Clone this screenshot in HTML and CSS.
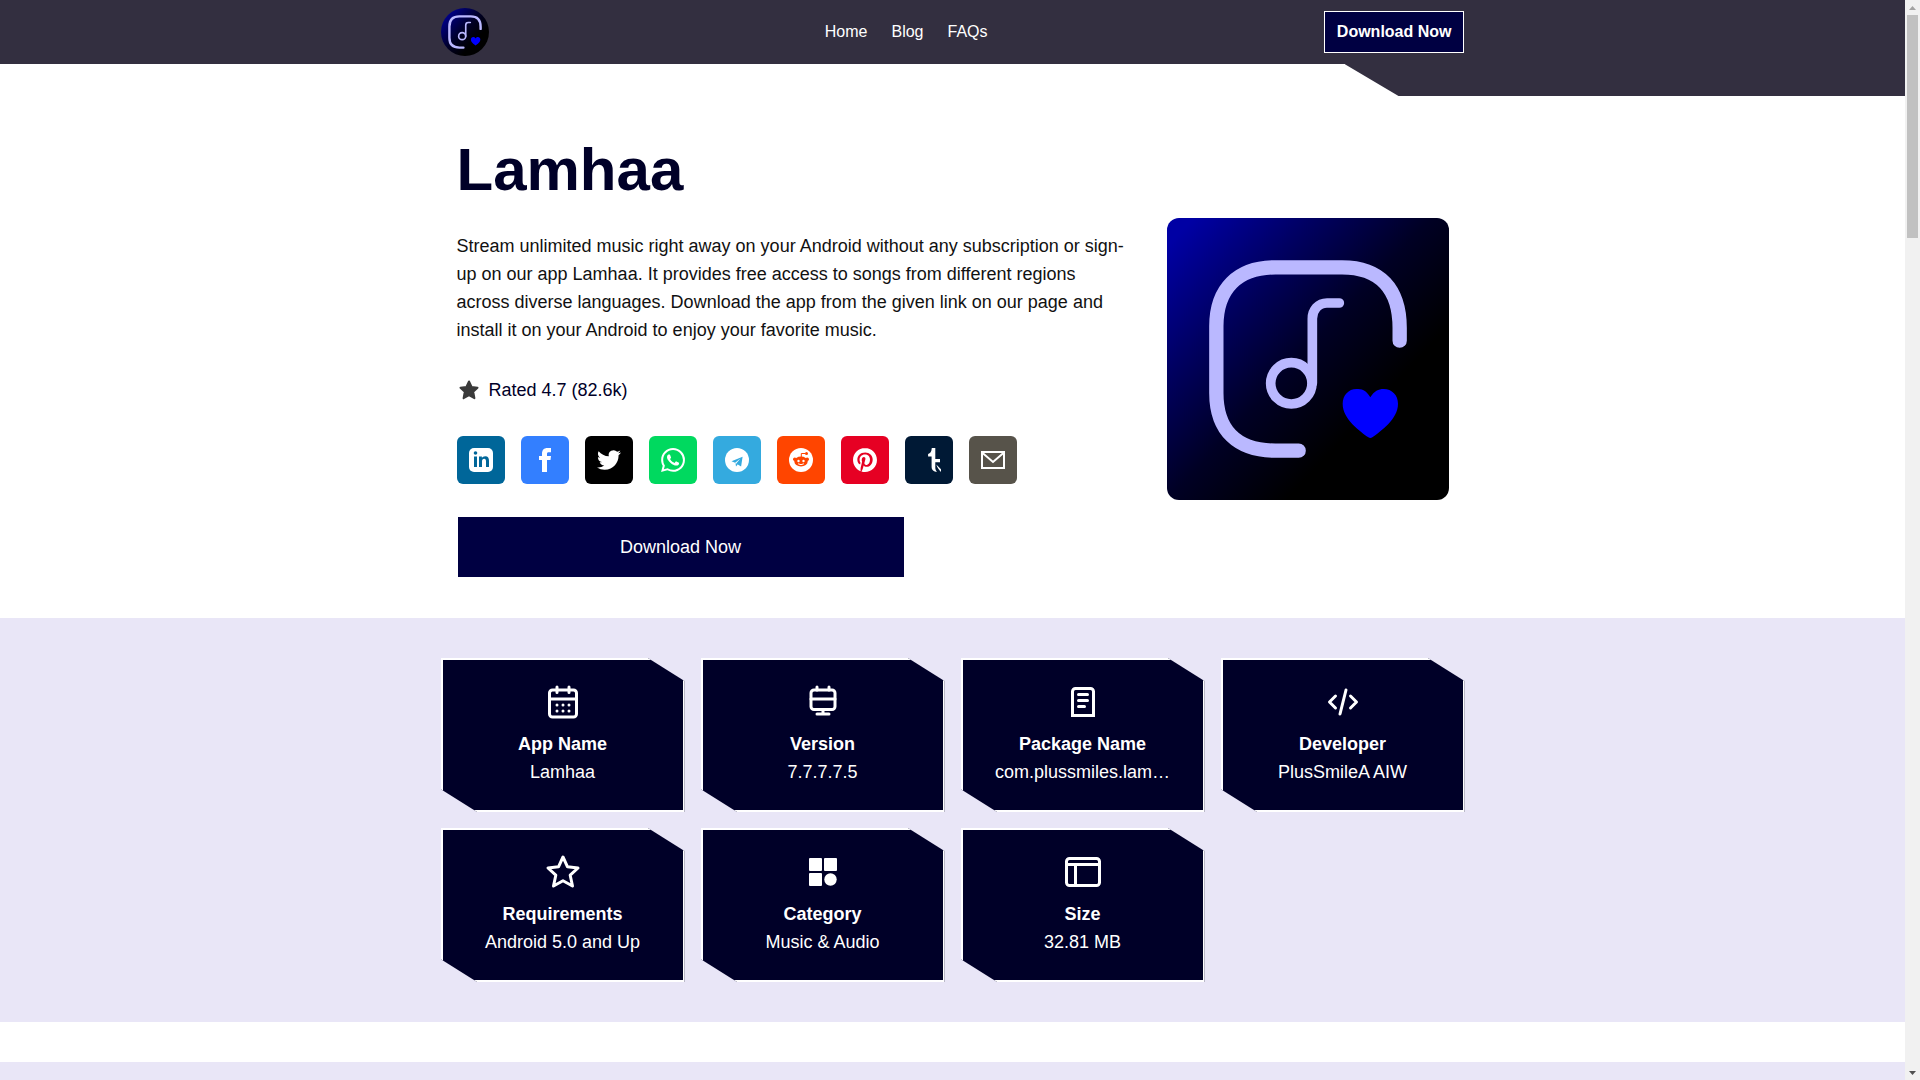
FILE: index.html
```html
<!DOCTYPE html>
<html lang="en">
<head>
  <meta charset="UTF-8">
  <meta name="viewport" content="width=device-width, initial-scale=1">
  <title>Lamhaa</title>
  <link rel="stylesheet" href="styles.css">
</head>
<body>
  <!-- app logo, used in the header and the hero -->
  <svg class="defs" aria-hidden="true">
    <defs>
      <linearGradient id="logo-bg" x1="0" y1="0.1" x2="0.75" y2="0.8">
        <stop offset="0" stop-color="#0000a4"/>
        <stop offset="0.3" stop-color="#000062"/>
        <stop offset="0.6" stop-color="#000024"/>
        <stop offset="0.9" stop-color="#000"/>
      </linearGradient>
      <symbol id="logo" viewBox="0 0 846 846">
        <rect width="846" height="846" fill="url(#logo-bg)"/>
        <g fill="none" stroke="#bab8ff" stroke-linecap="round">
          <path stroke-width="43" d="M698 368V330C698 212 638 148 525 148H325C212 148 148 212 148 325V525C148 638 212 698 325 698H395"/>
          <circle stroke-width="29" cx="373" cy="496" r="62"/>
          <path stroke-width="29" d="M436 496V302C436 276 454 255 480 255H517"/>
        </g>
        <path fill="#0000ff" d="M610 538C596 515 584 513 568 513C545 513 527 532 527 557C527 604 580 640 604 658Q610 662 616 658C640 640 693 604 693 557C693 532 675 513 650 513C634 513 622 519 610 538Z"/>
      </symbol>
    </defs>
  </svg>

  <div class="page">
    <header>
      <div class="container header-inner">
        <a class="logo" href="#" aria-label="Lamhaa"><svg><use href="#logo"/></svg></a>
        <nav>
          <a href="#">Home</a>
          <a href="#">Blog</a>
          <a href="#">FAQs</a>
        </nav>
        <a class="btn-header" href="#">Download Now</a>
      </div>
    </header>
    <div class="header-corner"></div>

    <section class="container hero">
      <div class="hero-text">
        <h1>Lamhaa</h1>
        <p>Stream unlimited music right away on your Android without any subscription or sign-up on our app Lamhaa. It provides free access to songs from different regions across diverse languages. Download the app from the given link on our page and install it on your Android to enjoy your favorite music.</p>
        <div class="rating">
          <svg viewBox="0 0 24 24"><path fill="#3a3a3a" stroke="#3a3a3a" stroke-width="2" stroke-linejoin="round" d="M12 3.5L14.6 9 20.5 9.7 16.2 13.8 17.4 20.2 12 17.2 6.600 20.2 7.800 13.8 3.500 9.700 9.400 9Z"/></svg>
          <span>Rated 4.7 (82.6k)</span>
        </div>
        <div class="share">
          <button class="linkedin" aria-label="LinkedIn">
            <svg viewBox="0 0 24 24"><rect width="24" height="24" rx="5" fill="#fff"/><circle cx="6.500" cy="5" r="1.800" fill="#069"/><path fill="#069" d="M5 8.500h3V19H5zM10 8.500h2.900V10c.6-1.100 1.700-1.800 3.300-1.800 2.900 0 3.800 1.800 3.800 4.600V19h-3v-5.600c0-1.700-.5-2.600-1.800-2.600-1.500 0-2.200 1-2.200 2.700V19h-3z"/></svg>
          </button>
          <button class="facebook" aria-label="Facebook">
            <svg viewBox="0 0 24 24"><path fill="#fff" d="M9 24V12H6V8h3V6c0-4 1.800-6 5.500-6H18v4.200h-2.200C14.400 4.200 14 4.800 14 6v2h4l-.5 4H14v12z"/></svg>
          </button>
          <button class="twitter" aria-label="Twitter">
            <svg viewBox="0 0 24 24"><path fill="#fff" d="M23.953 4.57a10 10 0 01-2.825.775 4.958 4.958 0 002.163-2.723c-.951.555-2.005.959-3.127 1.184a4.92 4.92 0 00-8.384 4.482C7.690 8.095 4.067 6.130 1.640 3.162a4.822 4.822 0 00-.666 2.475c0 1.710.870 3.213 2.188 4.096a4.904 4.904 0 01-2.228-.616v.060a4.923 4.923 0 003.946 4.827 4.996 4.996 0 01-2.212.085 4.936 4.936 0 004.604 3.417 9.867 9.867 0 01-6.102 2.105c-.390 0-.779-.023-1.170-.067a13.995 13.995 0 007.557 2.209c9.053 0 13.998-7.496 13.998-13.985 0-.210 0-.420-.015-.630A9.935 9.935 0 0024 4.590z"/></svg>
          </button>
          <button class="whatsapp" aria-label="WhatsApp">
            <svg viewBox="0 0 24 24"><path fill="#fff" d="M17.472 14.382c-.297-.149-1.758-.867-2.030-.967-.273-.099-.471-.148-.670.150-.197.297-.767.966-.940 1.164-.173.199-.347.223-.644.075-.297-.150-1.255-.463-2.390-1.475-.883-.788-1.480-1.761-1.653-2.059-.173-.297-.018-.458.130-.606.134-.133.298-.347.446-.520.149-.174.198-.298.298-.497.099-.198.050-.371-.025-.520-.075-.149-.669-1.612-.916-2.207-.242-.579-.487-.500-.669-.510-.173-.008-.371-.010-.570-.010-.198 0-.520.074-.792.372-.272.297-1.040 1.016-1.040 2.479 0 1.462 1.065 2.875 1.213 3.074.149.198 2.096 3.200 5.077 4.487.709.306 1.262.489 1.694.625.712.227 1.360.195 1.871.118.571-.085 1.758-.719 2.006-1.413.248-.694.248-1.289.173-1.413-.074-.124-.272-.198-.570-.347m-5.421 7.403h-.004a9.870 9.870 0 01-5.031-1.378l-.361-.214-3.741.982.998-3.648-.235-.374a9.860 9.860 0 01-1.510-5.260c.001-5.450 4.436-9.884 9.888-9.884 2.640 0 5.122 1.030 6.988 2.898a9.825 9.825 0 012.893 6.994c-.003 5.450-4.437 9.884-9.885 9.884m8.413-18.297A11.815 11.815 0 0012.050 0C5.495 0 .160 5.335.157 11.892c0 2.096.547 4.142 1.588 5.945L.057 24l6.305-1.654a11.882 11.882 0 005.683 1.448h.005c6.554 0 11.890-5.335 11.893-11.893a11.821 11.821 0 00-3.480-8.413z"/></svg>
          </button>
          <button class="telegram" aria-label="Telegram">
            <svg viewBox="0 0 24 24"><circle cx="12" cy="12" r="12" fill="#fff"/><path fill="#34aadf" d="M17.600 8.800L6.500 13.300l3.600 1.400 5.400-4.100-4.300 5 4.900 2.900zM10.500 15.300l.5 3.200 1.700-1.900z"/></svg>
          </button>
          <button class="reddit" aria-label="Reddit">
            <svg viewBox="0 0 24 24"><circle cx="12" cy="12" r="12" fill="#fff"/><path fill="none" stroke="#ff4500" d="M12.300 9V5.500h4"/><g fill="#ff4500"><circle cx="17.500" cy="5.600" r="1.500"/><circle cx="5.800" cy="11.300" r="1.800"/><circle cx="18.200" cy="11.300" r="1.800"/><ellipse cx="12" cy="13.500" rx="6.700" ry="5"/></g><circle cx="9.500" cy="13" r="1.200" fill="#fff"/><circle cx="14.500" cy="13" r="1.200" fill="#fff"/><path fill="none" stroke="#fff" stroke-linecap="round" d="M9.500 16q2.500 1.600 5 0"/></svg>
          </button>
          <button class="pinterest" aria-label="Pinterest">
            <svg viewBox="0 0 24 24"><path fill="#fff" d="M12.017 0C5.396 0 .029 5.367.029 11.987c0 5.079 3.158 9.417 7.618 11.162-.105-.949-.199-2.403.041-3.439.219-.937 1.406-5.957 1.406-5.957s-.359-.720-.359-1.781c0-1.663.967-2.911 2.168-2.911 1.024 0 1.518.769 1.518 1.688 0 1.029-.653 2.567-.992 3.992-.285 1.193.600 2.165 1.775 2.165 2.128 0 3.768-2.245 3.768-5.487 0-2.861-2.063-4.869-5.008-4.869-3.410 0-5.409 2.562-5.409 5.199 0 1.033.394 2.143.889 2.741.099.120.112.225.085.345-.090.375-.293 1.199-.334 1.363-.053.225-.172.271-.401.165-1.495-.690-2.433-2.878-2.433-4.646 0-3.776 2.748-7.252 7.920-7.252 4.158 0 7.392 2.967 7.392 6.923 0 4.135-2.607 7.462-6.233 7.462-1.214 0-2.354-.629-2.758-1.379l-.749 2.848c-.269 1.045-1.004 2.352-1.498 3.146 1.123.345 2.306.535 3.550.535 6.607 0 11.985-5.365 11.985-11.987C23.970 5.390 18.592.026 11.985.026z"/></svg>
          </button>
          <button class="tumblr" aria-label="Tumblr">
            <svg viewBox="0 0 24 24"><path fill="#fff" d="M14.800 0h3.500v11H23v3.200h-4.700v5.300c0 1.800.4 3 1.700 4.300-3.200 0-5.400-1.700-5.400-5V8.600h-3.500V6c2.200-.6 3.400-2.300 3.700-6zM19.300 16.500l4.700 4.800V24c-1.700-1.700-3.800-4.200-4.700-7.500z"/></svg>
          </button>
          <button class="email" aria-label="Email">
            <svg viewBox="0 0 24 24"><path fill="none" stroke="#fff" stroke-width="2" d="M1 4h22v16H1zM1 4.500l11 9.500 11-9.500"/></svg>
          </button>
        </div>
        <a class="btn-download" href="#">Download Now</a>
      </div>
      <svg class="app-image" role="img" aria-label="Lamhaa"><use href="#logo"/></svg>
    </section>

    <section class="info">
      <div class="container cards">
        <div class="card">
          <svg viewBox="0 0 36 36"><rect x="4.500" y="6" width="27" height="27" rx="3"/><path d="M4.500 15h27M12 3v5.500M24 3v5.500"/><path class="dots" d="M12 21h0M18 21h0M24 21h0M12 27h0M18 27h0M24 27h0"/></svg>
          <h3>App Name</h3>
          <p>Lamhaa</p>
        </div>
        <div class="card">
          <svg viewBox="0 0 36 36"><rect x="6" y="6" width="24" height="19.500" rx="3"/><path d="M6 15h24M12 3v3M24 3v3M18 25.500V30M12 30h12"/></svg>
          <h3>Version</h3>
          <p>7.7.7.7.5</p>
        </div>
        <div class="card">
          <svg viewBox="0 0 36 36"><path class="sheet" d="M7.500 31.500v-24a3 3 0 013-3h15a3 3 0 013 3v24z"/><path d="M13.500 10.500h9M13.500 16.500h9M13.500 22.500h6"/></svg>
          <h3>Package Name</h3>
          <p>com.plussmiles.lam…</p>
        </div>
        <div class="card">
          <svg viewBox="0 0 36 36"><path d="M10.500 12l-6 6 6 6M25.500 12l6 6-6 6M21 6l-6 24"/></svg>
          <h3>Developer</h3>
          <p>PlusSmileA AIW</p>
        </div>
        <div class="card">
          <svg viewBox="0 0 36 36"><path d="M18 3l4.500 9.800 10.500 1.200-7.800 7.200 2.300 10.800L18 26.800 8.500 32l2.300-10.800L3 14l10.500-1.200z"/></svg>
          <h3>Requirements</h3>
          <p>Android 5.0 and Up</p>
        </div>
        <div class="card">
          <svg class="solid" viewBox="0 0 36 36"><rect x="4" y="4" width="13" height="13" rx="1"/><rect x="19" y="4" width="13" height="13" rx="1"/><rect x="4" y="19" width="13" height="13" rx="1"/><circle cx="25.500" cy="25.500" r="6.200"/></svg>
          <h3>Category</h3>
          <p>Music &amp; Audio</p>
        </div>
        <div class="card">
          <svg viewBox="0 0 36 36"><rect x="1.500" y="4.500" width="33" height="27" rx="3"/><path d="M1.500 10.500h33M10.500 10.500v21"/></svg>
          <h3>Size</h3>
          <p>32.81 MB</p>
        </div>
      </div>
    </section>

    <section class="next"></section>
  </div>

  <div class="scrollbar" aria-hidden="true">
    <svg viewBox="0 0 15 15"><path fill="#a3a3a3" d="M4 10l3.500-4 3.500 4z"/></svg>
    <div class="track"><div class="thumb"></div></div>
    <svg viewBox="0 0 15 15"><path fill="#505050" d="M4 6l3.500 4L11 6z"/></svg>
  </div>
</body>
</html>
```
FILE: styles.css
```css
* {
  box-sizing: border-box;
  margin: 0;
  padding: 0;
}
body {
  display: grid;
  grid-template-columns: minmax(0, 1fr) 15px;
  height: 100vh;
  overflow: hidden;
  background-color: #fff;
  color: #111;
  font-family: "Liberation Sans", Arial, sans-serif;
  font-size: 16px;
  line-height: 24px;
}
a {
  color: white;
  text-decoration: none;
}
svg {
  display: block;
}
.defs {
  position: absolute;
  width: 0;
  height: 0;
}
.page {
  height: 100vh;
  overflow: hidden;
}
.container {
  max-width: 1024px;
  margin: 0 auto;
}

/* header */
header {
  background-color: #332f40;
}
.header-inner {
  display: flex;
  justify-content: space-between;
  align-items: center;
  height: 64px;
}
.logo svg {
  width: 48px;
  height: 48px;
  border-radius: 50%;
}
nav {
  display: flex;
  gap: 24px;
}
.btn-header {
  background-color: #000042;
  border: 1px solid white;
  padding: 8px 12px;
  font-weight: bold;
}
.header-corner {
  width: calc(50% - 392px);
  height: 32px;
  margin-left: auto;
  background-color: #332f40;
  clip-path: polygon(0 0, 100% 0, 100% 100%, 54px 100%);
}

/* hero */
.hero {
  display: grid;
  grid-template-columns: minmax(0, 1fr) 282px;
  gap: 40px;
  align-items: center;
  padding: 44px 16px 40px;
}
.hero-text {
  display: flex;
  flex-direction: column;
  gap: 32px;
  font-size: 18px;
  line-height: 28px;
}
h1 {
  font-size: 60px;
  line-height: 60px;
  color: #000028;
}
.rating {
  display: flex;
  align-items: center;
  gap: 8px;
  color: #000028;
}
.rating svg {
  width: 24px;
  height: 24px;
}
.share {
  display: flex;
  gap: 16px;
}
.share button {
  display: flex;
  align-items: center;
  justify-content: center;
  width: 48px;
  height: 48px;
  border: none;
  border-radius: 6px;
  cursor: pointer;
}
.share svg {
  width: 24px;
  height: 24px;
}
.linkedin { background-color: #006699; }
.facebook { background-color: #337fff; }
.twitter { background-color: #000; }
.whatsapp { background-color: #00d95f; }
.telegram { background-color: #34aadf; }
.reddit { background-color: #ff4500; }
.pinterest { background-color: #e60023; }
.tumblr { background-color: #001935; }
.email { background-color: #57534a; }
.btn-download {
  max-width: 448px;
  padding: 16px;
  background-color: #000042;
  border: 1px solid white;
  text-align: center;
}
.app-image {
  width: 282px;
  height: 282px;
  border-radius: 12px;
}

/* info cards */
.info {
  background-color: #e9e6f7;
  padding: 40px 0;
}
.cards {
  display: grid;
  grid-template-columns: repeat(4, minmax(0, 1fr));
  gap: 16px;
}
.card {
  padding: 24px 32px;
  background-color: #000028;
  border: 2px solid white;
  color: white;
  font-size: 18px;
  line-height: 28px;
  text-align: center;
  clip-path: polygon(0 0, 85% 0, 100% 15%, 100% 100%, 15% 100%, 0 85%);
}
.card svg {
  width: 36px;
  height: 36px;
  margin: 0 auto 10px;
  fill: none;
  stroke: white;
  stroke-width: 3;
  stroke-linecap: round;
  stroke-linejoin: round;
}
.card .sheet {
  stroke-linejoin: miter;
}
.card .solid {
  fill: white;
  stroke: none;
}
.card h3 {
  font-size: 18px;
}
.card p {
  overflow: hidden;
  text-overflow: ellipsis;
  white-space: nowrap;
}
.next {
  height: 400px;
  margin-top: 40px;
  background-color: #e9e6f7;
}

/* scrollbar */
.scrollbar {
  display: flex;
  flex-direction: column;
  background-color: #f1f1f1;
}
.scrollbar svg {
  width: 15px;
  height: 15px;
}
.track {
  flex: 1;
  padding: 0 2px;
}
.thumb {
  height: 223px;
  background-color: #c1c1c1;
}
```
